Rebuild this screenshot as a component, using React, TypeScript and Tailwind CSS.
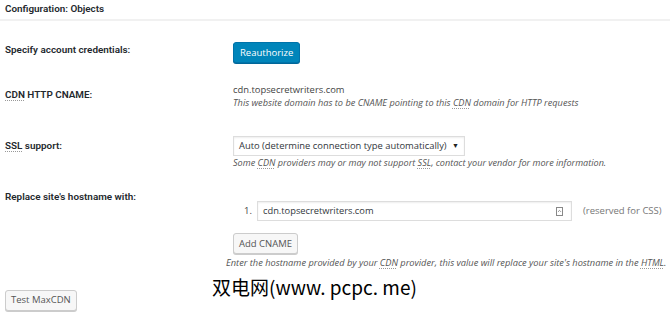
import { ChevronDown } from 'lucide-react';

const font = { fontFamily: '"Open Sans", "Liberation Sans", sans-serif' };
const labelFont = { fontFamily: 'Roboto, "Open Sans", sans-serif' };

const Abbr = ({ children }: { children: React.ReactNode }) => (
  <span className="underline decoration-dotted decoration-[#999] underline-offset-2">{children}</span>
);

const Row = ({ label, className, children }: { label: React.ReactNode; className?: string; children?: React.ReactNode }) => (
  <div className={`flex ${className ?? ''}`}>
    <div className="w-[233px] shrink-0 pl-[5px] text-[9.9px] font-semibold text-[#23282d]" style={labelFont}>
      {label}
    </div>
    <div className="min-w-0 flex-1">{children}</div>
  </div>
);

const btn =
  'h-[21px] rounded-[3px] border border-[#ccc] bg-[#f7f7f7] px-[5px] text-[9.5px] leading-none text-[#555] shadow-[0_1px_0_#ccc]';

export default function App() {
  return (
    <div className="relative h-[315px] w-[670px] overflow-hidden bg-white text-[#444]" style={font}>
      <div
        className="flex h-[21px] items-center border-b-2 border-[#f1f1f1] px-[5px] text-[9.9px] font-semibold text-[#23282d]"
        style={labelFont}
      >
        Configuration: Objects
      </div>

      <Row label="Specify account credentials:" className="mt-[17px] items-center">
        <button className="h-[21px] rounded-[3px] border border-[#0073aa] bg-[#0085ba] px-[6px] text-[9.5px] leading-none text-white shadow-[0_1px_0_#006799]">
          Reauthorize
        </button>
      </Row>

      <Row label={<><Abbr>CDN</Abbr> HTTP CNAME:</>} className="mt-[25px]">
        <div className="-mt-[5px] text-[9.4px] leading-[14px] text-[#444]">cdn.topsecretwriters.com</div>
        <div className="text-[9.2px] italic leading-[12px] text-[#555]">
          This website domain has to be CNAME pointing to this <Abbr>CDN</Abbr> domain for HTTP requests
        </div>
      </Row>

      <Row label={<><Abbr>SSL</Abbr> support:</>} className="mt-[30px]">
        <div className="-mt-[3px] flex h-[20px] w-[232px] items-center justify-between whitespace-nowrap border border-[#ddd] px-[5px] text-[9.4px] text-[#32373c] shadow-[inset_0_1px_2px_rgba(0,0,0,0.07)]">
          <span>Auto (determine connection type automatically)</span>
          <span className="text-[7px] text-[#222]">▼</span>
        </div>
        <div className="mt-[1px] text-[9.1px] italic leading-[12px] text-[#555]">
          Some <Abbr>CDN</Abbr> providers may or may not support <Abbr>SSL</Abbr>, contact your vendor for more information.
        </div>
      </Row>

      <Row label="Replace site's hostname with:" className="mt-[21px]">
        <div className="mt-[11px] flex items-center">
          <span className="w-[24px] pl-[11px] text-[9.5px] text-[#444]">1.</span>
          <div className="flex h-[20px] w-[315px] items-center justify-between border border-[#ddd] px-[5px] text-[9.3px] text-[#32373c] shadow-[inset_0_1px_2px_rgba(0,0,0,0.07)]">
            <span>cdn.topsecretwriters.com</span>
            <span className="mr-[3px] flex h-[9px] w-[7px] items-center justify-center border border-[#888] text-[#555]">
              <ChevronDown size={6} strokeWidth={3} className="rotate-180" />
            </span>
          </div>
          <span className="ml-[11px] text-[9.5px] text-[#777]">(reserved for CSS)</span>
        </div>
        <button className={`mt-[12px] ${btn}`}>Add CNAME</button>
        <div className="-ml-[7px] mt-[3px] whitespace-nowrap text-[9.25px] italic leading-[12px] text-[#555]">
          Enter the hostname provided by your <Abbr>CDN</Abbr> provider, this value will replace your site's hostname in the <Abbr>HTML</Abbr>.
        </div>
      </Row>

      <div className="mt-[16px] pl-[5px]">
        <button className={btn}>Test MaxCDN</button>
      </div>

      <div
        className="absolute left-[212px] top-[277px] text-[19px] leading-none text-black"
        style={{ fontFamily: '"Noto Sans CJK SC", "DejaVu Sans", sans-serif' }}
      >
        双电网(www. pcpc. me)
      </div>
    </div>
  );
}
